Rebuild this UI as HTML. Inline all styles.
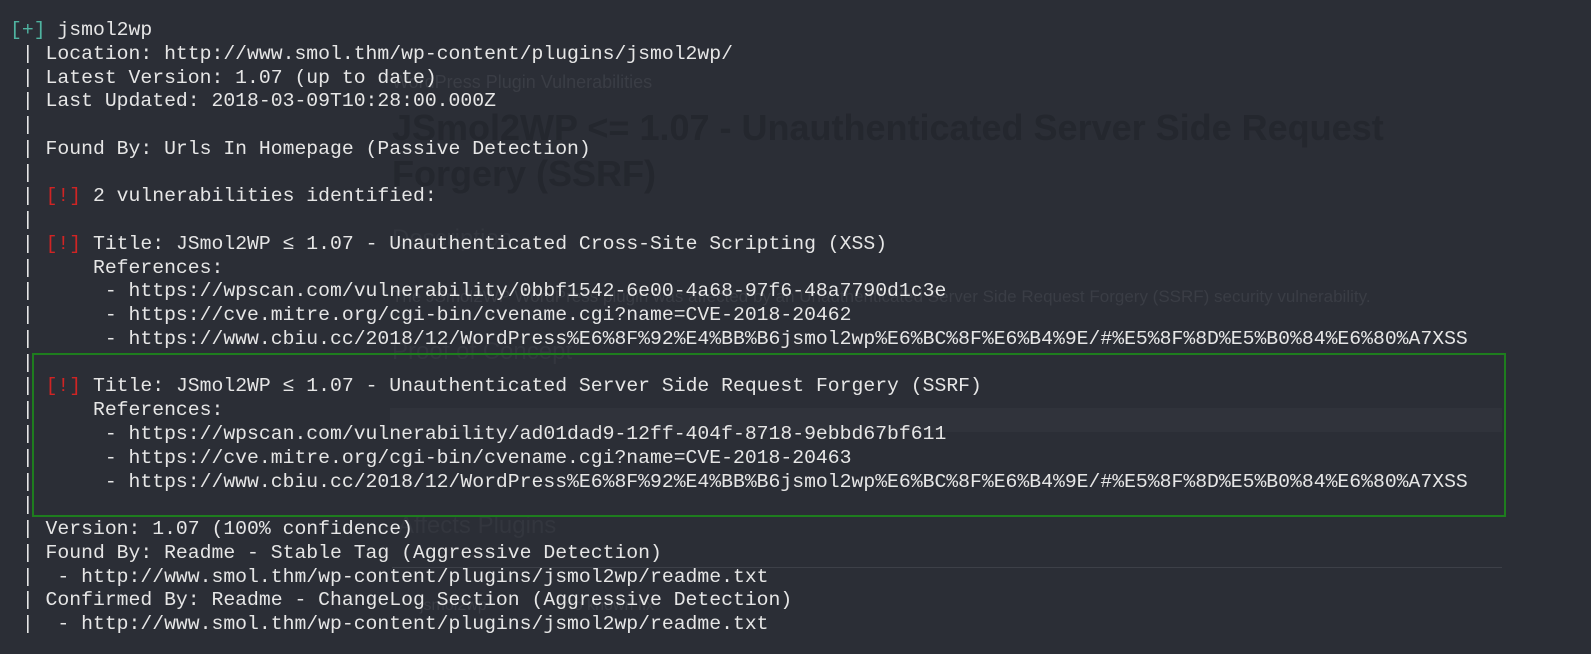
<!DOCTYPE html>
<html><head><meta charset="utf-8"><style>
html,body{margin:0;padding:0;width:1591px;height:654px;overflow:hidden;background:#2b2e36;}
.bg{position:absolute;font-family:"Liberation Sans",sans-serif;color:#33363e;white-space:nowrap;}
pre{position:absolute;left:10px;top:19px;margin:0;font-family:"Liberation Mono",monospace;font-size:19.75px;line-height:23.76px;color:#e6e6e6;letter-spacing:0;}
.g{color:#4fb3a0}.r{color:#d02424}
.box{position:absolute;left:32px;top:353px;width:1470px;height:160px;border:2px solid #1e7d1e;}
</style></head><body>
<div class="bg" style="left:392px;top:72px;font-size:18px;color:#3a3d45">WordPress Plugin Vulnerabilities</div>
<div class="bg" style="left:392px;top:105px;font-size:36px;font-weight:bold;line-height:46px;color:#24272e">JSmol2WP &lt;= 1.07 - Unauthenticated Server Side Request<br>Forgery (SSRF)</div>
<div class="bg" style="left:392px;top:225px;font-size:24px;color:#33363e">Description</div>
<div class="bg" style="left:392px;top:287px;font-size:17px;color:#3a3d45">The JSmol2WP WordPress plugin was affected by an Unauthenticated Server Side Request Forgery (SSRF) security vulnerability.</div>
<div class="bg" style="left:392px;top:338px;font-size:24px;color:#33363e">Proof of Concept</div>
<div style="position:absolute;left:390px;top:408px;width:1112px;height:24px;background:#30333b"></div>
<div class="bg" style="left:398px;top:512px;font-size:24px;color:#33363e">Affects Plugins</div>
<div style="position:absolute;left:392px;top:567px;width:1110px;height:1px;background:#3d4048"></div>
<div class="bg" style="left:420px;top:597px;font-size:16px;color:#3a3d45">jsmol2wp &nbsp; &nbsp; &nbsp; &nbsp; &nbsp; &nbsp; &nbsp; &nbsp; No known fix</div>
<div class="box"></div>
<pre><span class="g">[+]</span> jsmol2wp
 | Location: http://www.smol.thm/wp-content/plugins/jsmol2wp/
 | Latest Version: 1.07 (up to date)
 | Last Updated: 2018-03-09T10:28:00.000Z
 |
 | Found By: Urls In Homepage (Passive Detection)
 |
 | <span class="r">[!]</span> 2 vulnerabilities identified:
 |
 | <span class="r">[!]</span> Title: JSmol2WP ≤ 1.07 - Unauthenticated Cross-Site Scripting (XSS)
 |     References:
 |      - https://wpscan.com/vulnerability/0bbf1542-6e00-4a68-97f6-48a7790d1c3e
 |      - https://cve.mitre.org/cgi-bin/cvename.cgi?name=CVE-2018-20462
 |      - https://www.cbiu.cc/2018/12/WordPress%E6%8F%92%E4%BB%B6jsmol2wp%E6%BC%8F%E6%B4%9E/#%E5%8F%8D%E5%B0%84%E6%80%A7XSS
 |
 | <span class="r">[!]</span> Title: JSmol2WP ≤ 1.07 - Unauthenticated Server Side Request Forgery (SSRF)
 |     References:
 |      - https://wpscan.com/vulnerability/ad01dad9-12ff-404f-8718-9ebbd67bf611
 |      - https://cve.mitre.org/cgi-bin/cvename.cgi?name=CVE-2018-20463
 |      - https://www.cbiu.cc/2018/12/WordPress%E6%8F%92%E4%BB%B6jsmol2wp%E6%BC%8F%E6%B4%9E/#%E5%8F%8D%E5%B0%84%E6%80%A7XSS
 |
 | Version: 1.07 (100% confidence)
 | Found By: Readme - Stable Tag (Aggressive Detection)
 |  - http://www.smol.thm/wp-content/plugins/jsmol2wp/readme.txt
 | Confirmed By: Readme - ChangeLog Section (Aggressive Detection)
 |  - http://www.smol.thm/wp-content/plugins/jsmol2wp/readme.txt</pre>
</body></html>
